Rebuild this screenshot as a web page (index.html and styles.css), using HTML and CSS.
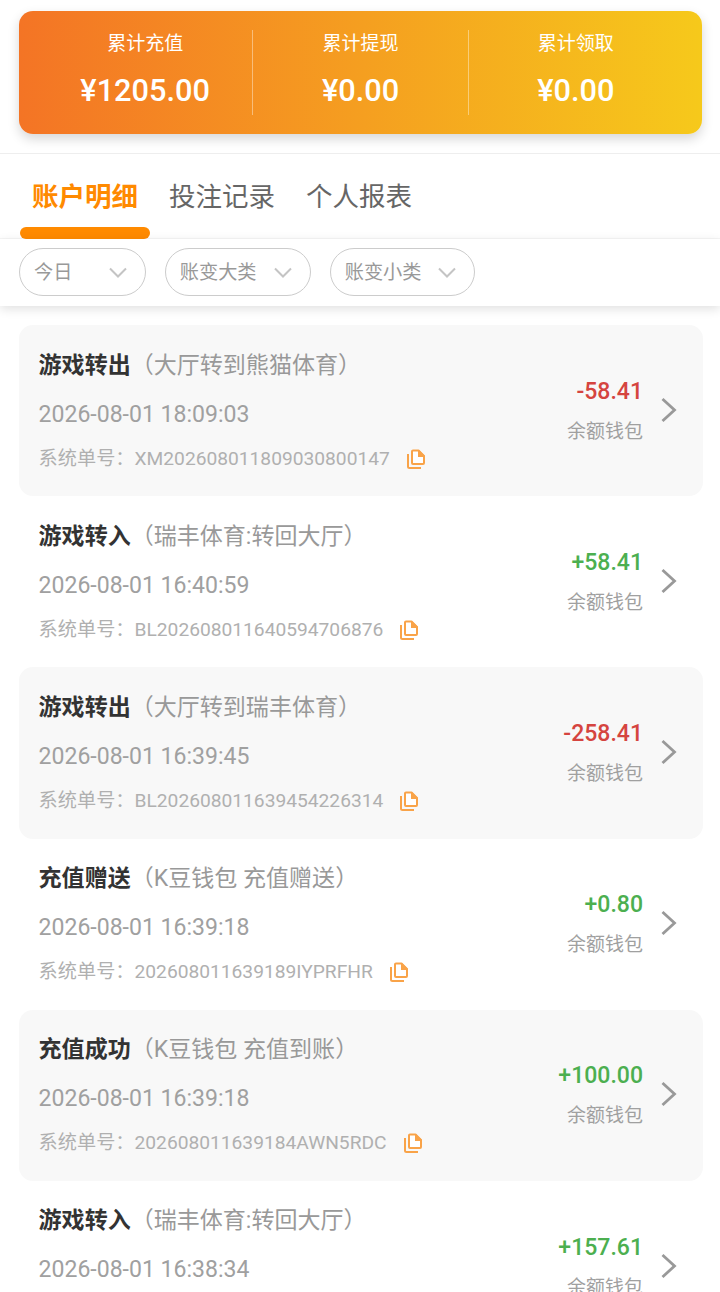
FILE: index.html
```html
<!DOCTYPE html>
<html lang="zh-CN">
<head>
    <meta charset="UTF-8">
    <meta name="viewport" content="width=device-width, initial-scale=1.0">
    <title>账户明细</title>
    <link rel="stylesheet" href="styles.css">
</head>
<body>
    <svg class="defs" width="0" height="0">
        <symbol id="icon-copy" viewBox="0 0 20 20">
            <path d="M2 5v12.500a1.500 1.500 0 0 0 1.500 1.500H15" fill="none" stroke="currentColor" stroke-width="2"/>
            <path d="M12.500 1.500H7a1 1 0 0 0-1 1V14a1 1 0 0 0 1 1h10a1 1 0 0 0 1-1V7z" fill="#fff" stroke="currentColor" stroke-width="2" stroke-linejoin="round"/>
            <path d="M12 1h1l6 6v1h-7z" fill="currentColor"/>
        </symbol>
        <symbol id="icon-right" viewBox="0 0 18 26">
            <path d="M2.500 2l12 11-12 11" fill="none" stroke="currentColor" stroke-width="2.800"/>
        </symbol>
        <symbol id="icon-down" viewBox="0 0 18 11">
            <path d="M1 1.500l8 8 8-8" fill="none" stroke="currentColor" stroke-width="2"/>
        </symbol>
    </svg>

    <!-- 汇总 -->
    <div class="summary-wrap">
        <div class="summary">
            <div class="summary-item">
                <p class="summary-label">累计充值</p>
                <p class="summary-value">¥1205.00</p>
            </div>
            <div class="summary-item">
                <p class="summary-label">累计提现</p>
                <p class="summary-value">¥0.00</p>
            </div>
            <div class="summary-item">
                <p class="summary-label">累计领取</p>
                <p class="summary-value">¥0.00</p>
            </div>
        </div>
    </div>

    <!-- 选项卡 -->
    <div class="tabs">
        <div class="tab active">账户明细</div>
        <div class="tab">投注记录</div>
        <div class="tab">个人报表</div>
    </div>

    <!-- 筛选 -->
    <div class="filters">
        <div class="filter"><span class="filter-label">今日</span><svg class="filter-arrow"><use href="#icon-down"/></svg></div>
        <div class="filter"><span class="filter-label">账变大类</span><svg class="filter-arrow"><use href="#icon-down"/></svg></div>
        <div class="filter"><span class="filter-label">账变小类</span><svg class="filter-arrow"><use href="#icon-down"/></svg></div>
    </div>

    <!-- 明细列表 -->
    <div class="list">
        <div class="record shaded">
            <div class="record-main">
                <p class="record-title"><b>游戏转出</b>（大厅转到熊猫体育）</p>
                <p class="record-time">2026-08-01 18:09:03</p>
                <p class="record-no">系统单号：XM202608011809030800147<svg class="copy"><use href="#icon-copy"/></svg></p>
            </div>
            <div class="record-side">
                <p class="amount minus">-58.41</p>
                <p class="wallet">余额钱包</p>
            </div>
            <svg class="arrow"><use href="#icon-right"/></svg>
        </div>

        <div class="record">
            <div class="record-main">
                <p class="record-title"><b>游戏转入</b>（瑞丰体育:转回大厅）</p>
                <p class="record-time">2026-08-01 16:40:59</p>
                <p class="record-no">系统单号：BL202608011640594706876<svg class="copy"><use href="#icon-copy"/></svg></p>
            </div>
            <div class="record-side">
                <p class="amount plus">+58.41</p>
                <p class="wallet">余额钱包</p>
            </div>
            <svg class="arrow"><use href="#icon-right"/></svg>
        </div>

        <div class="record shaded">
            <div class="record-main">
                <p class="record-title"><b>游戏转出</b>（大厅转到瑞丰体育）</p>
                <p class="record-time">2026-08-01 16:39:45</p>
                <p class="record-no">系统单号：BL202608011639454226314<svg class="copy"><use href="#icon-copy"/></svg></p>
            </div>
            <div class="record-side">
                <p class="amount minus">-258.41</p>
                <p class="wallet">余额钱包</p>
            </div>
            <svg class="arrow"><use href="#icon-right"/></svg>
        </div>

        <div class="record">
            <div class="record-main">
                <p class="record-title"><b>充值赠送</b>（K豆钱包 充值赠送）</p>
                <p class="record-time">2026-08-01 16:39:18</p>
                <p class="record-no">系统单号：202608011639189IYPRFHR<svg class="copy"><use href="#icon-copy"/></svg></p>
            </div>
            <div class="record-side">
                <p class="amount plus">+0.80</p>
                <p class="wallet">余额钱包</p>
            </div>
            <svg class="arrow"><use href="#icon-right"/></svg>
        </div>

        <div class="record shaded">
            <div class="record-main">
                <p class="record-title"><b>充值成功</b>（K豆钱包 充值到账）</p>
                <p class="record-time">2026-08-01 16:39:18</p>
                <p class="record-no">系统单号：202608011639184AWN5RDC<svg class="copy"><use href="#icon-copy"/></svg></p>
            </div>
            <div class="record-side">
                <p class="amount plus">+100.00</p>
                <p class="wallet">余额钱包</p>
            </div>
            <svg class="arrow"><use href="#icon-right"/></svg>
        </div>

        <div class="record">
            <div class="record-main">
                <p class="record-title"><b>游戏转入</b>（瑞丰体育:转回大厅）</p>
                <p class="record-time">2026-08-01 16:38:34</p>
            </div>
            <div class="record-side">
                <p class="amount plus">+157.61</p>
                <p class="wallet">余额钱包</p>
            </div>
            <svg class="arrow"><use href="#icon-right"/></svg>
        </div>
    </div>
</body>
</html>
```
FILE: styles.css
```css
* {
    box-sizing: border-box;
}

html, body {
    height: 100%;
    overflow: hidden;
}

body {
    margin: 0;
    font-family: Roboto, "Noto Sans CJK SC", sans-serif;
    background-color: #fff;
    color: #333;
}

p {
    margin: 0;
}

.defs {
    display: block;
    height: 0;
}

/* 汇总 */
.summary-wrap {
    padding: 11px 18px 19px 19px;
    border-bottom: 1px solid #eee;
}

.summary {
    display: flex;
    height: 123px;
    padding: 19px;
    border-radius: 14px;
    background: linear-gradient(90deg, #f47425, #f6c91b);
    box-shadow: 0 5px 12px rgba(0, 0, 0, 0.16);
    color: #fff;
}

.summary-item {
    flex: 1;
    text-align: center;
    border-right: 1px solid rgba(255, 255, 255, 0.4);
}

.summary-item:last-child {
    border-right: none;
}

.summary-label {
    font-size: 19px;
    line-height: 28px;
}

.summary-value {
    margin-top: 15px;
    font-size: 30.72px;
    line-height: 36px;
    font-weight: 500;
}

/* 选项卡 */
.tabs {
    display: flex;
    gap: 7px;
    height: 85px;
    padding-left: 20px;
    border-bottom: 1px solid #f6f6f6;
}

.tab {
    position: relative;
    width: 130px;
    padding-top: 22px;
    text-align: center;
    font-size: 26.5px;
    line-height: 42px;
    color: #666;
}

.tab.active {
    color: #ff8a00;
    font-weight: 700;
}

.tab.active::after {
    content: "";
    position: absolute;
    left: 0;
    right: 0;
    bottom: -1px;
    height: 12px;
    border-radius: 6px;
    background-color: #ff8a00;
}

/* 筛选 */
.filters {
    position: relative;
    display: flex;
    gap: 19.2px;
    height: 67px;
    padding: 9px 19px 0;
    background-color: #fff;
    box-shadow: 0 3px 10px rgba(0, 0, 0, 0.12);
}

.filter {
    display: flex;
    align-items: center;
    height: 48px;
    padding: 0 18px 0 14px;
    border: 1px solid #ccc;
    border-radius: 24px;
    font-size: 19.2px;
    color: #999;
}

.filter-label {
    min-width: 57.6px;
    padding-bottom: 3px;
}

.filter-arrow {
    width: 18px;
    height: 11px;
    margin-left: 17px;
    color: #c4c4c4;
}

/* 明细列表 */
.list {
    padding: 19px 17px 0 19px;
}

.record {
    display: flex;
    align-items: center;
    height: 171.2px;
    padding: 0 25px 0 19.6px;
    border-radius: 14px;
}

.record.shaded {
    background-color: #f8f8f8;
}

.record-main {
    flex: 1;
    min-width: 0;
    align-self: flex-start;
    padding-top: 24.5px;
}

.record-title {
    font-size: 23.04px;
    line-height: 32px;
    color: #999;
}

.record-title b {
    font-weight: 700;
    color: #333;
}

.record-time {
    margin-top: 17px;
    font-size: 23.04px;
    line-height: 32px;
    color: #a0a0a0;
}

.record-no {
    display: flex;
    align-items: center;
    margin-top: 15px;
    font-size: 19.2px;
    line-height: 26px;
    color: #b0b0b0;
}

.copy {
    width: 20px;
    height: 20px;
    margin-left: 16px;
    color: #f9a348;
}

.record-side {
    text-align: right;
}

.amount {
    font-size: 23.04px;
    line-height: 32px;
    font-weight: 500;
}

.amount.minus {
    color: #d5443f;
}

.amount.plus {
    color: #4caf50;
}

.wallet {
    margin-top: 10px;
    font-size: 19px;
    line-height: 28px;
    color: #a0a0a0;
}

.arrow {
    width: 18px;
    height: 26px;
    margin-left: 17px;
    margin-bottom: 2px;
    color: #999;
}
```
